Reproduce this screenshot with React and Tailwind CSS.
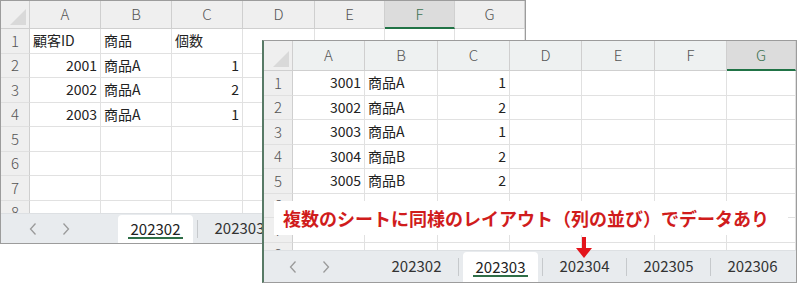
import React from "react";

const W1_COLS = ["A", "B", "C", "D", "E", "F", "G"];

function Corner() {
  return (
    <div className="flex items-end justify-end pr-[2px] pb-[2px] bg-[#efefef] border-r border-b border-[#cfcfcf] h-full">
      <svg width="18" height="18" viewBox="0 0 18 18">
        <polygon points="17,1 17,17 1,17" fill="#d9d9d9" />
      </svg>
    </div>
  );
}

function ColHead({ label, selected, bg }) {
  if (selected) {
    return (
      <div className="flex items-center justify-center bg-[#dcdcdc] border-b-2 border-[#217346] border-r border-r-[#d0d0d0] text-[#3e7352] text-[15px] font-light">
        {label}
      </div>
    );
  }
  return (
    <div className={`flex items-center justify-center ${bg} border-b border-r border-[#cfcfcf] text-[#555] text-[15px] font-light`}>
      {label}
    </div>
  );
}

function RowHead({ n, bg }) {
  return (
    <div className={`flex items-center justify-center ${bg} border-r border-r-[#cfcfcf] border-b border-b-[#e0e0e0] text-[#555] text-[15px] font-light`}>
      {n}
    </div>
  );
}

function Cell({ v, right }) {
  return (
    <div
      className={`flex items-center border-r border-b border-[#e1e1e1] bg-white text-[14px] text-[#222] whitespace-nowrap overflow-hidden ${
        right ? "justify-end pr-[3px]" : "justify-start pl-[3px]"
      }`}
    >
      {v}
    </div>
  );
}

function ChevL() {
  return (
    <svg width="10" height="14" viewBox="0 0 10 14">
      <polyline points="7.5,1.5 2.5,7 7.5,12.5" fill="none" stroke="#9a9a9a" strokeWidth="1.3" />
    </svg>
  );
}
function ChevR() {
  return (
    <svg width="10" height="14" viewBox="0 0 10 14">
      <polyline points="2.5,1.5 7.5,7 2.5,12.5" fill="none" stroke="#9a9a9a" strokeWidth="1.3" />
    </svg>
  );
}

function Sep() {
  return <div className="w-px h-[18px] bg-[#c6c9cc] shrink-0" />;
}

function Tab({ label, active }) {
  if (active) {
    return (
      <div className="w-[83px] h-full shrink-0 px-[4px] pt-[1px]">
        <div className="h-full bg-white rounded-t-[4px] flex items-center justify-center">
          <span className="leading-[17px] px-[3px] border-b-2 border-[#2f6e47] text-[15px] text-[#222]">
            {label}
          </span>
        </div>
      </div>
    );
  }
  return (
    <div className="w-[83px] h-full shrink-0 flex items-center justify-center text-[15px] text-[#333]">
      <span className="leading-[17px] pb-[2px]">{label}</span>
    </div>
  );
}

function TabBar({ tabs, activeIdx, navClass }) {
  const items = [];
  tabs.forEach((t, i) => {
    if (i > 0) items.push(<Sep key={"s" + i} />);
    items.push(<Tab key={t} label={t} active={i === activeIdx} />);
  });
  return (
    <div className="flex items-center h-full bg-[#e8ebee] border-t border-[#dde0e3] overflow-hidden">
      <div className={`flex items-center shrink-0 h-full ${navClass}`}>
        <ChevL />
        <ChevR />
      </div>
      {items}
    </div>
  );
}

export default function App() {
  const w1Rows = [
    [["顧客ID"], ["商品"], ["個数"]],
    [["2001", 1], ["商品A"], ["1", 1]],
    [["2002", 1], ["商品A"], ["2", 1]],
    [["2003", 1], ["商品A"], ["1", 1]],
    [], [], [], [],
  ];
  const w2Rows = [
    [["3001", 1], ["商品A"], ["1", 1]],
    [["3002", 1], ["商品A"], ["2", 1]],
    [["3003", 1], ["商品A"], ["1", 1]],
    [["3004", 1], ["商品B"], ["2", 1]],
    [["3005", 1], ["商品B"], ["2", 1]],
    [], [], [],
  ];

  return (
    <div className="relative w-[800px] h-[285px] bg-white overflow-hidden font-['Noto_Sans_CJK_JP','Noto_Sans',sans-serif]">
      {/* Window 1 */}
      <div className="absolute left-0 top-0 w-[526px] h-[244px] border border-[#9c9c9c] bg-white flex flex-col overflow-hidden">
        <div className="grid grid-cols-[29px_71px_71px_71px_72px_70px_70px_70px] h-[28px] shrink-0">
          <Corner />
          {W1_COLS.map((c) => (
            <ColHead key={c} label={c} selected={c === "F"} bg="bg-[#efefef]" />
          ))}
        </div>
        <div className="h-[184px] shrink-0 overflow-hidden">
          {w1Rows.map((r, i) => (
            <div key={i} className="grid grid-cols-[29px_71px_71px_71px_72px_70px_70px_70px] h-[24.5px]">
              <RowHead n={i + 1} bg="bg-[#efefef]" />
              {[0, 1, 2, 3, 4, 5, 6].map((j) => (
                <Cell key={j} v={r[j] ? r[j][0] : ""} right={r[j] && r[j][1]} />
              ))}
            </div>
          ))}
        </div>
        <div className="flex-1">
          <TabBar tabs={["202302", "202303"]} activeIdx={0} navClass="w-[113px] pl-[27px] gap-[23px]" />
        </div>
      </div>

      {/* Window 2 */}
      <div className="absolute left-[262px] top-[40px] w-[535px] h-[243px] border border-[#9c9c9c] border-l-2 border-l-[#587a66] bg-white flex flex-col overflow-hidden">
        <div className="grid grid-cols-[29px_72px_73px_72px_72px_73px_72px_69px] h-[30px] shrink-0">
          <Corner />
          {W1_COLS.map((c) => (
            <ColHead key={c} label={c} selected={c === "G"} bg="bg-[#eef1f1]" />
          ))}
        </div>
        <div className="h-[179px] shrink-0 overflow-hidden">
          {w2Rows.map((r, i) => (
            <div key={i} className="grid grid-cols-[29px_72px_73px_72px_72px_73px_72px_69px] h-[24.5px]">
              <RowHead n={i + 1} bg="bg-[#efefef]" />
              {[0, 1, 2, 3, 4, 5, 6].map((j) => (
                <Cell key={j} v={r[j] ? r[j][0] : ""} right={r[j] && r[j][1]} />
              ))}
            </div>
          ))}
        </div>
        <div className="flex-1">
          <TabBar
            tabs={["202302", "202303", "202304", "202305", "202306"]}
            activeIdx={1}
            navClass="w-[111px] pl-[24px] gap-[23px]"
          />
        </div>
      </div>

      {/* Annotation */}
      <div className="absolute left-[274px] top-[201px] w-[514px] h-[34px] bg-white flex items-center pl-[9px]">
        <span className="text-[18px] font-bold text-[#d01c1c] leading-none whitespace-nowrap">
          複数のシートに同様のレイアウト（列の並び）でデータあり
        </span>
      </div>

      {/* Arrow */}
      <svg className="absolute left-[576px] top-[237px]" width="16" height="22" viewBox="0 0 16 22">
        <rect x="6" y="0" width="4" height="12" fill="#e3141b" />
        <polygon points="0,11 16,11 8,21" fill="#e3141b" />
      </svg>
    </div>
  );
}
